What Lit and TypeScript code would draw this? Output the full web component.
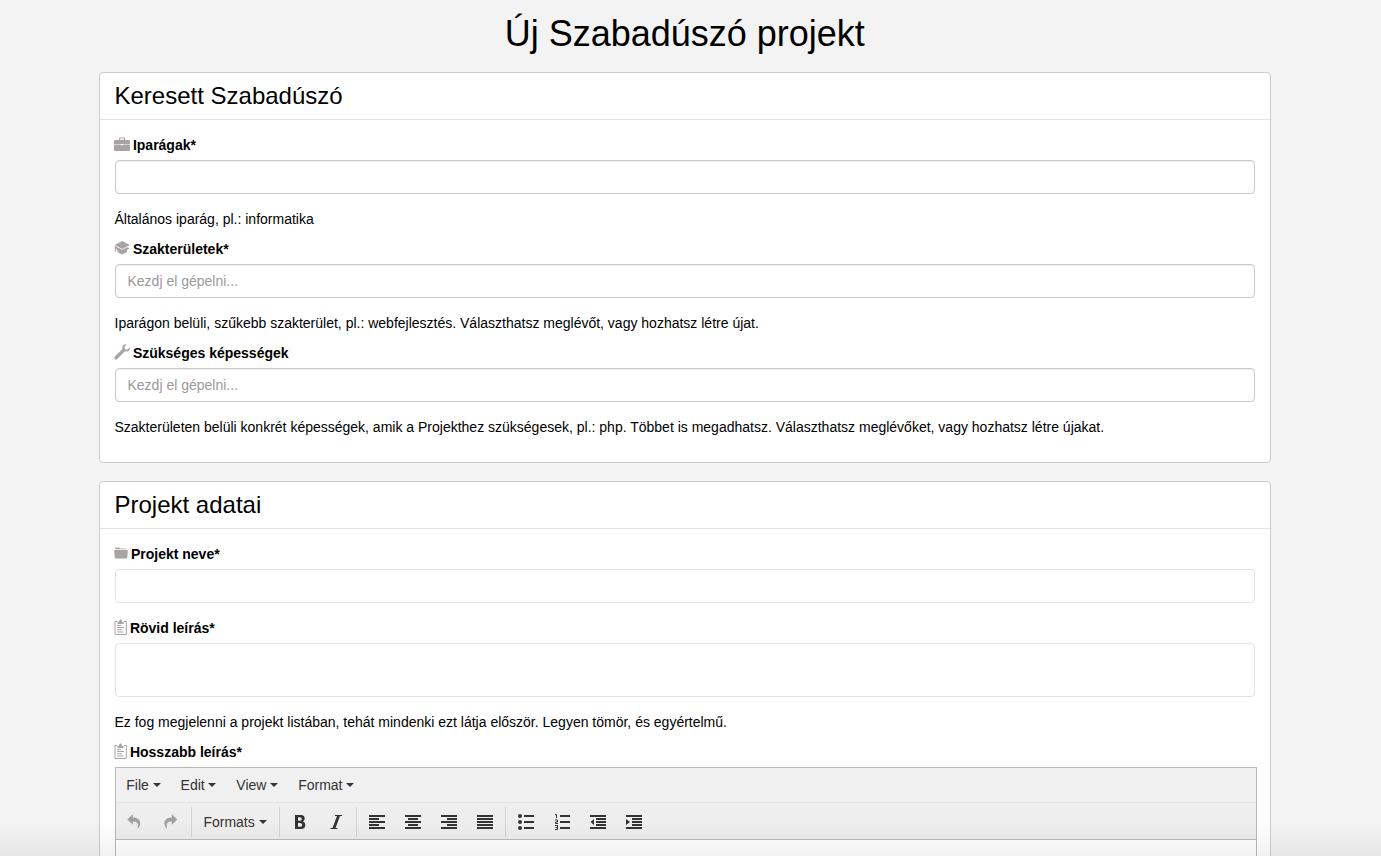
import { LitElement, html, css, svg } from "lit";
import { customElement } from "lit/decorators.js";

const bars = (rows: number[][]) =>
  svg`${rows.map(([x, y, w]) => svg`<rect x=${x} y=${y} width=${w} height="2"></rect>`)}`;

const tool = (body: unknown) =>
  html`<button class="tool"><svg width="16" height="16" viewBox="0 0 16 16">${body}</svg></button>`;

const undo = svg`<path d="M6.800.3 1.300 5.500 6.800 10.700V7.600c4.200-.2 6 1.800 4.700 7.400C16.500 9.500 14.500 3.400 6.800 3.400z"/>`;
const redo = svg`<path d="M9.800.3 15.300 5.500 9.800 10.700V7.600c-4.200-.2-6 1.800-4.700 7.400C.1 9.500 2.100 3.400 9.800 3.400z"/>`;

const icons = {
  briefcase: svg`<path d="M5 4V2.600Q5 1.400 6.200 1.400h3.600Q11 1.400 11 2.600V4h4q1 0 1 1v3.400H9V8H7v.4H0V5q0-1 1-1zM6.200 4h3.600V2.600H6.200zM0 8.900h7v.4h2v-.4h7V14q0 .9-1 .9H1q-1 0-1-.9z" fill-rule="evenodd"/>`,
  education: svg`<path d="M8.200 1 15.800 4.900 8.200 8.900.8 4.900zM3.300 7.200 8.200 9.800 13.200 7.200l2.300 1.200-2.500 1.500v2L8.200 14.400l-4.800-2.500v-2L1.700 8.900v3.200H.8V5.600z"/>`,
  wrench: svg`<path d="M15.700 3.600 13 5.700l-2-.7-.5-2.200L12.700.3C9.500-.3 7.500 2.200 8.500 5L.8 12.500q-1 1.300 0 2.500 1.300 1 2.500 0L10.800 7.300C14 8.300 16.300 6.300 15.700 3.600z"/>`,
  folder: svg`<path d="M1.200 4.200V3.100Q1.200 2.400 1.900 2.400h3.400l.8 1h5.700q.7 0 .7.600v.2H1.200zM1 5h12q.9 0 .8.800l-.5 7q-.1.800-.9.800H1.700q-.8 0-.9-.8L.2 5.800Q.2 5 1 5z"/>`,
  clipboard: svg`<path d="M3.500 2.500H1v13h11.300v-13H9.800" fill="none" stroke="currentColor"/><path d="M3.500 4.900V3H5Q5 .3 6.500.3T8 3h1.500v1.900zM3 6h4v1H3zM3 8h7v1H3zM3 10.200h5v1H3zM3 12.400h6.500v1H3z"/>`,
};

@customElement("app-root")
export class AppRoot extends LitElement {
  static styles = css`
    :host {
      display: block;
      position: relative;
      height: 856px;
      overflow: hidden;
      background: #f3f3f3;
      color: #000;
      font: 14px/20px "Liberation Sans", Arial, sans-serif;
    }
    * { box-sizing: border-box; }
    .page { width: 1172px; margin-left: 99px; }
    h1 {
      margin: 0;
      height: 72px;
      padding: 14px 0.5px 0 0;
      text-align: center;
      font-weight: 400;
      font-size: 36px;
      line-height: 40px;
    }
    .panel {
      background: #fff;
      border: 1px solid #ccc;
      border-radius: 4px;
      margin-bottom: 18px;
    }
    h2 {
      margin: 0;
      height: 47px;
      padding: 10px 14.5px;
      border-bottom: 1px solid #e3e3e3;
      font-size: 24px;
      line-height: 26px;
      font-weight: 400;
    }
    .body { padding: 15px; }
    .label {
      display: flex;
      font-weight: 700;
      height: 20px;
      margin-bottom: 5px;
    }
    .label svg { flex: none; margin: 1px 2.6px 0 -0.7px; color: #aaa3a3; fill: currentColor; }
    .field {
      display: block;
      width: 1140px;
      height: 34px;
      padding: 6px 11.5px;
      margin: 0 0 15px;
      border: 1px solid #ccc;
      border-radius: 4px;
      background: #fff;
      box-shadow: inset 0 1px 1px rgba(0, 0, 0, 0.075);
      font: inherit;
      resize: none;
      outline: 0;
    }
    .field::placeholder { color: #999; opacity: 1; }
    .light { border-color: #e3e3e3; box-shadow: none; }
    .area { height: 54px; }
    .help { margin: 0 0 10px -0.5px; white-space: nowrap; }
    .editor {
      width: 1142px;
      height: 260px;
      border: 1px solid #bababa;
      background: #fff;
      color: #333;
    }
    .menubar {
      display: flex;
      height: 35px;
      background: #f0f0f0;
      border-bottom: 1px solid #e2e2e2;
      padding: 7px 0 0 10.3px;
      gap: 20px;
    }
    .menu { display: flex; align-items: center; height: 20px; gap: 3.7px; }
    .menu::after {
      content: "";
      border: 4px solid transparent;
      border-top-color: #333;
      border-bottom: 0;
    }
    .toolbar {
      display: flex;
      height: 37px;
      padding-top: 4px;
      background: #eee;
      border-bottom: 1px solid #bababa;
    }
    .group { display: flex; height: 30px; align-items: center; flex: none; }
    .group + .group { border-left: 1px solid #d4d4d4; padding-left: 2px; }
    .history { width: 75px; color: #a0a0a0; }
    .formats { width: 88px; }
    .formats .menu { margin-left: 9.400px; gap: 4px; }
    .style { width: 77px; }
    .align { width: 149px; }
    .tool {
      display: grid;
      place-items: center;
      width: 36px;
      height: 30px;
      padding: 0;
      border: 0;
      background: none;
      color: inherit;
    }
    .tool svg { fill: currentColor; }
    .shade {
      position: absolute;
      inset: auto 0 0 0;
      height: 36px;
      background: linear-gradient(rgba(0, 0, 0, 0), rgba(0, 0, 0, 0.05));
      pointer-events: none;
    }
  `;

  label(icon: keyof typeof icons, width: number, text: string) {
    return html`<div class="label">
      <svg width=${width} height="16" viewBox="0 0 ${width} 16">${icons[icon]}</svg>${text}
    </div>`;
  }

  render() {
    return html`
      <div class="page">
        <h1>Új Szabadúszó projekt</h1>
        <section class="panel">
          <h2>Keresett Szabadúszó</h2>
          <div class="body">
            ${this.label("briefcase", 16, "Iparágak*")}
            <input class="field" />
            <p class="help">Általános iparág, pl.: informatika</p>
            ${this.label("education", 16, "Szakterületek*")}
            <input class="field" placeholder="Kezdj el gépelni..." />
            <p class="help">Iparágon belüli, szűkebb szakterület, pl.: webfejlesztés. Választhatsz meglévőt, vagy hozhatsz létre újat.</p>
            ${this.label("wrench", 16, "Szükséges képességek")}
            <input class="field" placeholder="Kezdj el gépelni..." />
            <p class="help">Szakterületen belüli konkrét képességek, amik a Projekthez szükségesek, pl.: php. Többet is megadhatsz. Választhatsz meglévőket, vagy hozhatsz létre újakat.</p>
          </div>
        </section>
        <section class="panel">
          <h2>Projekt adatai</h2>
          <div class="body">
            ${this.label("folder", 14, "Projekt neve*")}
            <input class="field light" />
            ${this.label("clipboard", 13, "Rövid leírás*")}
            <textarea class="field light area"></textarea>
            <p class="help">Ez fog megjelenni a projekt listában, tehát mindenki ezt látja először. Legyen tömör, és egyértelmű.</p>
            ${this.label("clipboard", 13, "Hosszabb leírás*")}
            <div class="editor">
              <div class="menubar">
                ${["File", "Edit", "View", "Format"].map((m) => html`<span class="menu">${m}</span>`)}
              </div>
              <div class="toolbar">
                <div class="group history">${tool(undo)} ${tool(redo)}</div>
                <div class="group formats"><span class="menu">Formats</span></div>
                <div class="group style">
                  ${tool(svg`<path fill-rule="evenodd" d="M3 1h6q3.700 0 3.700 3.500 0 2.200-1.700 3 2.300.8 2.300 3.500 0 4-4.300 4H3zM6 3.200v3.500h1.800q2 0 2-1.800 0-1.700-2-1.700zM6 9v3.800h2q2.200 0 2.200-1.900T8 9z"/>`)}
                  ${tool(svg`<path d="M7 1h7v1h-2L7.500 14h2v1h-7v-1h2L9 2H7z"/>`)}
                </div>
                <div class="group align">
                  ${tool(bars([[0, 1, 16], [0, 4, 10], [0, 7, 16], [0, 10, 10], [0, 13, 16]]))}
                  ${tool(bars([[0, 1, 16], [3, 4, 10], [0, 7, 16], [3, 10, 10], [0, 13, 16]]))}
                  ${tool(bars([[0, 1, 16], [6, 4, 10], [0, 7, 16], [6, 10, 10], [0, 13, 16]]))}
                  ${tool(bars([[0, 1, 16], [0, 4, 16], [0, 7, 16], [0, 10, 16], [0, 13, 16]]))}
                </div>
                <div class="group">
                  ${tool(svg`${bars([[6, 1, 10], [6, 7, 10], [6, 13, 10]])}<circle cx="2" cy="2" r="2"/><circle cx="2" cy="8" r="2"/><circle cx="2" cy="14" r="2"/>`)}
                  ${tool(svg`${bars([[6, 1, 10], [6, 7, 10], [6, 13, 10]])}<path d="M1 .5h1.500V4M1 6h2.500v2H1.500v1.500H4M1 11.500h2.500v4H1M1.500 13.500h2" fill="none" stroke="currentColor"/>`)}
                  ${tool(svg`${bars([[0, 1, 16], [6, 4, 10], [6, 7, 10], [6, 10, 10], [0, 13, 16]])}<path d="M4 5v6L.5 8z"/>`)}
                  ${tool(svg`${bars([[0, 1, 16], [6, 4, 10], [6, 7, 10], [6, 10, 10], [0, 13, 16]])}<path d="M0 5v6l4-3z"/>`)}
                </div>
              </div>
            </div>
          </div>
        </section>
      </div>
      <div class="shade"></div>
    `;
  }
}
